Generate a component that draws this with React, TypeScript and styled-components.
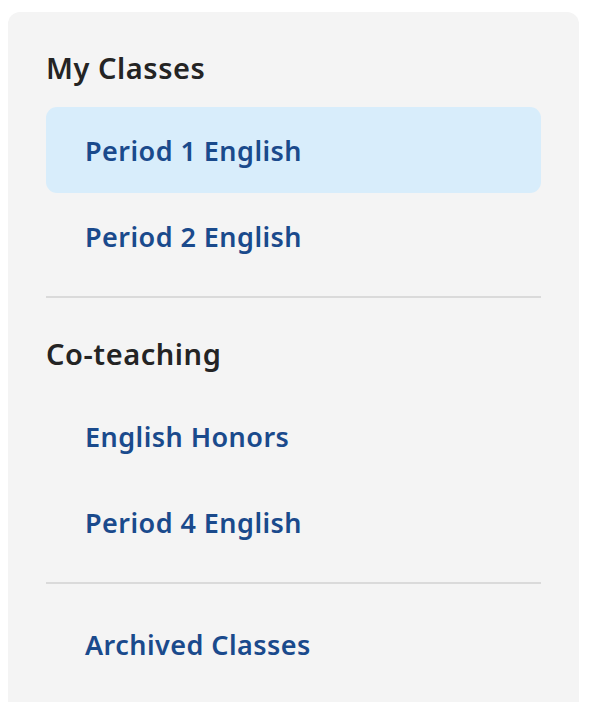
import styled, { createGlobalStyle } from 'styled-components';

const GlobalStyle = createGlobalStyle`
  html, body {
    margin: 0;
    padding: 0;
    background: #ffffff;
  }
  body {
    font-family: 'Noto Sans', Lato, sans-serif;
    -webkit-font-smoothing: antialiased;
  }
`;

const Page = styled.div`
  padding: 12px 11px 0 8px;
`;

const Panel = styled.nav`
  background: #f4f4f4;
  border-radius: 12px;
  padding: 0 38px 40px;
  min-height: 720px;
`;

const Section = styled.section`
  padding-top: 38px;
`;

const Heading = styled.h2`
  margin: 0 0 21px;
  font-size: 29px;
  line-height: 36px;
  font-weight: 600;
  letter-spacing: 0.55px;
  color: #242424;
`;

const List = styled.ul`
  list-style: none;
  margin: 0;
  padding: 0;
`;

const ArchiveList = styled(List)`
  padding-top: 17px;
`;

const Item = styled.li<{ $active?: boolean }>`
  display: flex;
  align-items: center;
  height: 86px;
  padding-left: 39px;
  border-radius: 11px;
  background: ${(p) => (p.$active ? '#d8edfb' : 'transparent')};
  color: #1a4a8c;
  font-size: 27px;
  font-weight: 600;
  letter-spacing: 0.45px;
  cursor: pointer;
`;

const Divider = styled.hr`
  border: 0;
  height: 2px;
  margin: 17px 0 0;
  background: #dadada;
`;

const myClasses = ['Period 1 English', 'Period 2 English'];
const coTeaching = ['English Honors', 'Period 4 English'];

export default function App() {
  return (
    <>
      <GlobalStyle />
      <Page>
        <Panel>
          <Section>
            <Heading>My Classes</Heading>
            <List>
              {myClasses.map((name, i) => (
                <Item key={name} $active={i === 0}>
                  {name}
                </Item>
              ))}
            </List>
          </Section>
          <Divider />
          <Section>
            <Heading>Co-teaching</Heading>
            <List>
              {coTeaching.map((name) => (
                <Item key={name}>{name}</Item>
              ))}
            </List>
          </Section>
          <Divider />
          <ArchiveList>
            <Item>Archived Classes</Item>
          </ArchiveList>
        </Panel>
      </Page>
    </>
  );
}
